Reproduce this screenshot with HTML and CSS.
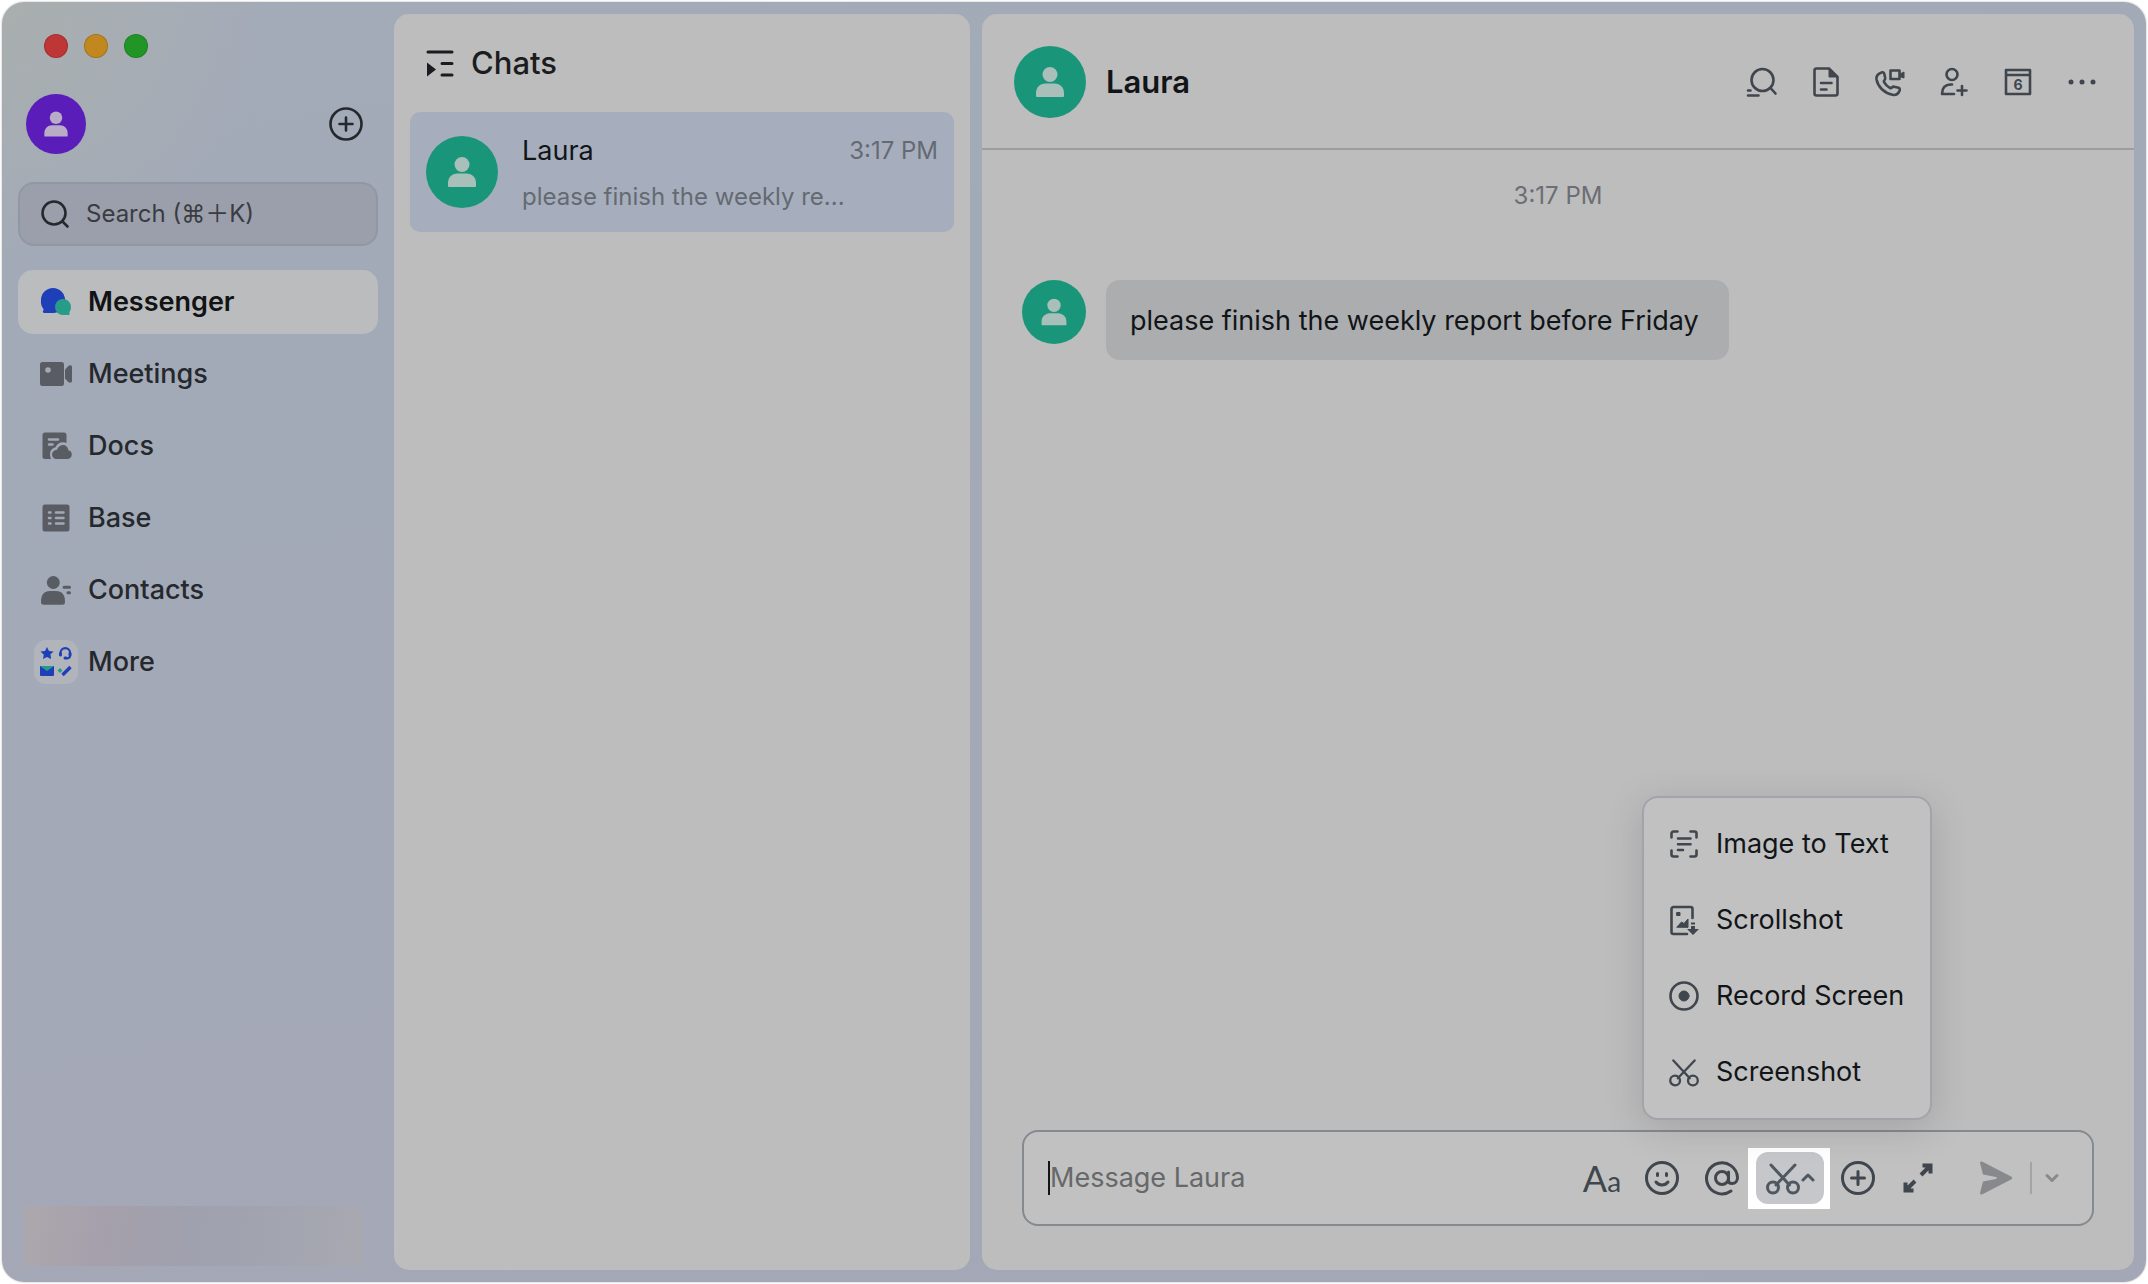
FILE: index.html
```html
<!DOCTYPE html>
<html lang="en">
<head>
  <meta charset="UTF-8">
  <meta name="viewport" content="width=device-width, initial-scale=1.0">
  <title>Messenger</title>
  <link rel="stylesheet" href="styles.css">
</head>
<body>
  <!-- shared shapes -->
  <svg class="defs" aria-hidden="true">
    <symbol id="person" viewBox="0 0 72 72">
      <circle cx="36" cy="28.5" r="7.5"/>
      <path d="M22 50v-3c0-5.500 4-9.500 9.500-9.500h9c5.500 0 9.500 4 9.500 9.500v3a1 1 0 0 1-1 1H23a1 1 0 0 1-1-1z"/>
    </symbol>
    <symbol id="scissors" viewBox="0 0 36 36">
      <path d="M6 5l18.500 20M30 5L11 25"/>
      <circle cx="8" cy="27.500" r="5.500"/>
      <circle cx="28" cy="27.500" r="5.500"/>
    </symbol>
    <symbol id="plus-circle" viewBox="0 0 36 36">
      <circle cx="18" cy="18" r="15.500"/>
      <path d="M18 11.500v13M11.500 18h13"/>
    </symbol>
  </svg>

  <div class="window">
    <aside class="sidebar">
      <div class="lights">
        <span class="light red"></span>
        <span class="light yellow"></span>
        <span class="light green"></span>
      </div>

      <div class="profile">
        <button class="avatar me" aria-label="My profile"><svg><use href="#person"/></svg></button>
        <button class="create" aria-label="Create"><svg class="line"><use href="#plus-circle"/></svg></button>
      </div>

      <label class="search">
        <svg class="line" width="30" height="30" viewBox="0 0 30 30"><circle cx="14" cy="14" r="11.500"/><path d="M22.500 22.500l5 5"/></svg>
        <input type="text" placeholder="Search (⌘＋K)" aria-label="Search">
      </label>

      <nav class="nav">
        <a class="nav-item active" href="#">
          <svg width="32" height="32" viewBox="0 0 32 32">
            <path fill="#1f3fb9" d="M13 2a12 12 0 0 1 12 12c0 7-5 13-12 13H4.500c-2 0-2-2-.8-3.500A13 13 0 0 1 1 14 12 12 0 0 1 13 2z"/>
            <path fill="#279d89" d="M23 13a8 8 0 0 1 8 8c0 2-.6 3.800-1.500 5v2c0 .8-.4 1-1 1H23a8 8 0 0 1 0-16z"/>
          </svg>
          Messenger
        </a>
        <a class="nav-item" href="#">
          <svg width="32" height="32" viewBox="0 0 32 32">
            <path fill-rule="evenodd" d="M2.500 4h19A2.500 2.500 0 0 1 24 6.500v19a2.500 2.500 0 0 1-2.500 2.500h-19A2.500 2.500 0 0 1 0 25.500v-19A2.500 2.500 0 0 1 2.500 4zM8 9.200a2.800 2.800 0 1 0 0 5.600 2.800 2.800 0 0 0 0-5.600z"/>
            <path d="M25 11.500l3-3.200c1.200-1.200 4-1.500 4 .7v14c0 2.200-2.800 1.900-4 .7l-3-3.200z"/>
          </svg>
          Meetings
        </a>
        <a class="nav-item" href="#">
          <svg width="32" height="32" viewBox="0 0 32 32">
            <path d="M5 2.500h19A2.500 2.500 0 0 1 26.500 5v8c-1-.5-2.200-.8-3.500-.8-3.700 0-6.300 2-7.500 5-3.500.8-5.500 3.300-5.500 6.800 0 2 .4 3.800 1.200 5H5A2.500 2.500 0 0 1 2.500 26.500V5A2.500 2.500 0 0 1 5 2.500z"/>
            <path class="cut" d="M9 9.500h9M9 14.500h3.500"/>
            <path d="M17 29c-6.500 0-6.700-8.800 0-9.300C19.500 12.800 28 14 28.300 20.300c5 .8 4.500 8.700-.8 8.700z"/>
          </svg>
          Docs
        </a>
        <a class="nav-item" href="#">
          <svg width="32" height="32" viewBox="0 0 32 32">
            <rect x="2.500" y="2.500" width="27" height="27" rx="2.500"/>
            <path class="cut" d="M9 10.500h1.500M16 10.500h7.500M9 16h1.500M16 16h7.500M9 21.500h1.500M16 21.500h7.500"/>
          </svg>
          Base
        </a>
        <a class="nav-item" href="#">
          <svg width="32" height="32" viewBox="0 0 32 32">
            <circle cx="13.300" cy="8.500" r="6.500"/>
            <path d="M1 28c0-7.500 3-11 9-11h6c6 0 9 3.500 9 11 0 1.800-.8 2.800-2.500 2.800h-19C1.800 30.800 1 29.800 1 28z"/>
            <path class="dash" d="M24 13.300h5.500M28 18.700h1.500"/>
          </svg>
          Contacts
        </a>
        <a class="nav-item" href="#">
          <svg class="tile" width="44" height="44" viewBox="0 0 44 44">
            <path fill="#279d89" d="M13 15h4v4z"/>
            <path fill="#1f3fb9" d="M13 7l2 4 4.500.6-3.300 3.100.8 4.300-4-2-4 2 .8-4.300-3.300-3.100L11 11z"/>
            <path fill="none" stroke="#1f3fb9" stroke-width="2.200" d="M26.500 15.500V13a4.800 4.800 0 0 1 9.600 0v2.500c0 1.500-1.500 3-4 3"/>
            <path stroke="#1f3fb9" stroke-width="3" stroke-linecap="round" d="M26.500 13.500v1.500M36 13.500v1.500M31 18h1"/>
            <path fill="#1f3fb9" d="M6 26h14v9a1 1 0 0 1-1 1H7a1 1 0 0 1-1-1z"/>
            <path fill="#279d89" d="M6 26h14l-7 5z"/>
            <path stroke="#1f3fb9" stroke-width="3.400" d="M28.500 35l8-8"/>
            <path fill="#279d89" d="M26 28l2.500 2.500L26 33l-2.500-2.500z"/>
          </svg>
          More
        </a>
      </nav>

      <div class="footer-blur"></div>
    </aside>

    <section class="panel chats">
      <h2 class="chats-title">
        <svg width="30" height="28" viewBox="0 0 30 28">
          <path fill="none" stroke="currentColor" stroke-width="3" stroke-linecap="round" d="M3 3h24M17 14.500h10M17 26h10"/>
          <path fill="currentColor" d="M2 13.500l9 7-9 7z"/>
        </svg>
        Chats
      </h2>
      <a class="chat-item" href="#">
        <span class="avatar large"><svg><use href="#person"/></svg></span>
        <span class="chat-body">
          <span class="chat-top"><span class="chat-name">Laura</span><time>3:17 PM</time></span>
          <span class="chat-preview">please finish the weekly re...</span>
        </span>
      </a>
    </section>

    <main class="panel conversation">
      <header class="header">
        <span class="avatar large"><svg><use href="#person"/></svg></span>
        <h1>Laura</h1>
        <div class="actions">
          <button aria-label="Search in chat"><svg class="line" width="32" height="32" viewBox="0 0 32 32"><circle cx="16.500" cy="14" r="11"/><path d="M24.500 22l5 5.500M2 24.500h2.500M2 29.500h10.500"/></svg></button>
          <button aria-label="Docs"><svg class="line" width="32" height="32" viewBox="0 0 32 32"><path d="M6.500 2.500H19l8.500 8.500v16.500a2 2 0 0 1-2 2h-19a2 2 0 0 1-2-2v-23a2 2 0 0 1 2-2zM11 17h10.500M11 23.500h5.500"/><path class="solid" d="M19 2.500V11h8.500z"/></svg></button>
          <button aria-label="Call"><svg class="line" width="32" height="32" viewBox="0 0 32 32"><path d="M7.500 6.500c1.300-.7 2.500 0 2.800 1.300l.9 4.200c.2 1-.2 1.700-.9 2.400-.5.500-.6 1.100-.2 1.800 1.400 2.600 3.400 4.500 6 5.800.7.300 1.200.2 1.700-.3.700-.8 1.300-1.200 2.300-1l4.500 1.100c1.300.4 1.500 1.800.8 3.300-1.500 3.300-3.600 4.300-6.800 3.700C10 27 4 21 2.500 13.500 2 10.200 4 7.800 7.500 6.500z"/><path d="M16.500 4.500h9v8.500h-9z"/><path class="solid" d="M27 7.500l3-1.500v6l-3-1z"/></svg></button>
          <button aria-label="Add members"><svg class="line" width="32" height="32" viewBox="0 0 32 32"><circle cx="14" cy="8.500" r="5.500"/><path d="M14 18.500h-1c-6 0-9 3.500-9 9.500h12M24 20v9M19.500 24.500h9"/></svg></button>
          <button aria-label="Calendar"><svg class="line" width="32" height="32" viewBox="0 0 32 32"><path d="M4 4h24v24H4zM4 9h24"/><text x="16" y="23.500">6</text></svg></button>
          <button aria-label="More actions"><svg width="32" height="32" viewBox="0 0 32 32"><circle cx="5" cy="16" r="2.500"/><circle cx="16" cy="16" r="2.500"/><circle cx="27" cy="16" r="2.500"/></svg></button>
        </div>
      </header>

      <div class="messages">
        <time>3:17 PM</time>
        <div class="message">
          <span class="avatar"><svg><use href="#person"/></svg></span>
          <p class="bubble">please finish the weekly report before Friday</p>
        </div>
      </div>

      <div class="composer">
        <span class="caret"></span>
        <input type="text" placeholder="Message Laura" aria-label="Message Laura">
        <div class="tools">
          <button class="format" aria-label="Formatting">A<small>a</small></button>
          <button aria-label="Emoji"><svg class="line" width="36" height="36" viewBox="0 0 36 36"><circle cx="18" cy="18" r="15.500"/><path d="M12 22c1.700 2.200 3.700 3 6 3s4.300-.8 6-3M13.500 13.500v2M22.500 13.500v2"/></svg></button>
          <button aria-label="Mention"><svg class="line" width="36" height="36" viewBox="0 0 36 36"><circle cx="18" cy="18" r="6.500"/><path d="M24.500 12v8.500c0 2 1.500 3 3.500 3 3.500 0 5.500-2.500 5.500-6A15.500 15.500 0 1 0 27 31"/></svg></button>
          <div class="highlight">
            <button class="snip" aria-label="Screenshot options" aria-expanded="true">
              <svg class="line" width="36" height="36"><use href="#scissors"/></svg>
              <svg class="line" width="14" height="36" viewBox="0 0 14 36"><path d="M2 20l5-5 5 5"/></svg>
            </button>
            <div class="menu">
              <button><svg class="line" width="32" height="32" viewBox="0 0 32 32"><path d="M3.500 9.500v-4a2 2 0 0 1 2-2h4M22.500 3.500h4a2 2 0 0 1 2 2v4M28.500 22.500v4a2 2 0 0 1-2 2h-4M9.500 28.500h-4a2 2 0 0 1-2-2v-4M10 10.500h12.500M10 16.200h12.500M10 22h5"/></svg>Image to Text</button>
              <button><svg class="line" width="32" height="32" viewBox="0 0 32 32"><path d="M24.500 14V5a2 2 0 0 0-2-2h-17a2 2 0 0 0-2 2v23a2 2 0 0 0 2 2H19"/><path class="solid" d="M9 8.500h3v3H9zM9 23l4.500-5 2.500 1.500 4-4.500v8z"/><path class="arrow" d="M23 18.500h4v2h-4zM23 22h4v3h4l-6 6-6-6h4z"/></svg>Scrollshot</button>
              <button><svg class="line" width="32" height="32" viewBox="0 0 32 32"><circle cx="16" cy="16" r="13.500"/><circle class="solid" cx="16" cy="16" r="5"/></svg>Record Screen</button>
              <button><svg class="line" width="32" height="32"><use href="#scissors"/></svg>Screenshot</button>
            </div>
          </div>
          <button aria-label="Attach"><svg class="line" width="36" height="36"><use href="#plus-circle"/></svg></button>
          <button aria-label="Expand"><svg class="line expand" width="36" height="36" viewBox="0 0 36 36"><path d="M21 15l9-9M22.500 5.500h8v8M15 21l-9 9M5.500 22.500v8h8"/></svg></button>
          <button class="send" aria-label="Send"><svg width="36" height="36" viewBox="0 0 36 36"><path d="M2 3c0-1.500 1.300-2 2.500-1.300l29 15c1 .7 1 2 0 2.600l-29 15C3.300 34.900 2 34.300 2 33l3-11.500 13-2.500c1-.3 1-1.700 0-2L5 14.500z"/></svg></button>
          <span class="divider"></span>
          <button class="send-options" aria-label="Send options"><svg class="line" width="16" height="36" viewBox="0 0 16 36"><path d="M3 15.500l5 5 5-5"/></svg></button>
        </div>
      </div>
    </main>
  </div>
</body>
</html>
```
FILE: styles.css
```css
* {
  box-sizing: border-box;
}

body {
  margin: 0;
  padding: 2px;
  height: 100vh;
  background: #fff;
  color: #111518;
  font-family: Inter, "Noto Sans CJK SC", sans-serif;
  font-size: 27px;
  line-height: 36px;
}

button,
input {
  font: inherit;
  color: inherit;
  background: none;
  border: none;
  padding: 0;
  outline: none;
}

button {
  display: flex;
  align-items: center;
  justify-content: center;
  cursor: pointer;
}

a {
  color: inherit;
  text-decoration: none;
}

h1,
h2,
p {
  margin: 0;
}

svg {
  flex: none;
  fill: currentColor;
}

.defs {
  position: absolute;
  width: 0;
  height: 0;
}

.line {
  fill: none;
  stroke: currentColor;
  stroke-width: 2.6;
  stroke-linecap: round;
  stroke-linejoin: round;
}

.line .solid {
  fill: currentColor;
  stroke-width: 1;
}

.line .arrow {
  fill: currentColor;
  stroke: none;
}

.window {
  display: grid;
  grid-template-columns: 392px 576px 1fr;
  height: 100%;
  padding: 12px 12px 12px 0;
  border-radius: 22px;
  background:
    radial-gradient(circle at 0 0, #a9afae, rgba(169, 175, 174, 0) 260px),
    linear-gradient(170deg, #a4abb8 0%, #a2aab7 25%, #a4a9b7 50%, #a4a7b6 100%);
  box-shadow: 0 0 2px rgba(0, 0, 0, 0.35);
}

.panel {
  display: flex;
  flex-direction: column;
  min-width: 0;
  border-radius: 15px;
  background: #bdbdbd;
}

.avatar {
  display: flex;
  flex: none;
  width: 64px;
  height: 64px;
  border-radius: 50%;
  background: #199679;
  color: #a9bfba;
}

.avatar svg {
  width: 100%;
  height: 100%;
}

.avatar.large {
  width: 72px;
  height: 72px;
}

.avatar.me {
  width: 60px;
  height: 60px;
  background: #5a1dba;
  color: #b9acc6;
}

/* sidebar */
.sidebar {
  display: flex;
  flex-direction: column;
  padding: 20px 16px 4px;
  color: #25282c;
}

.lights {
  display: flex;
  gap: 16px;
  padding-left: 26px;
}

.light {
  width: 24px;
  height: 24px;
  border-radius: 50%;
  border: 1px solid rgba(0, 0, 0, 0.15);
}

.red {
  background: #bf3636;
}

.yellow {
  background: #c0881f;
}

.green {
  background: #219627;
}

.profile {
  display: flex;
  align-items: center;
  justify-content: space-between;
  margin-top: 36px;
  padding: 0 14px 0 8px;
}

.create svg {
  width: 36px;
  height: 36px;
}

.search {
  display: flex;
  align-items: center;
  gap: 16px;
  height: 64px;
  margin-top: 28px;
  padding: 0 20px;
  border: 2px solid #9298a3;
  border-radius: 16px;
  background: #9b9fab;
}

.search input {
  flex: 1;
  min-width: 0;
  font-size: 24px;
}

.search input::placeholder {
  color: #393c41;
  opacity: 1;
}

.nav {
  display: flex;
  flex-direction: column;
  gap: 8px;
  margin-top: 24px;
  font-weight: 500;
}

.nav-item {
  display: flex;
  align-items: center;
  gap: 16px;
  height: 64px;
  padding: 0 22px;
  border-radius: 15px;
}

.nav-item svg {
  fill: #595d63;
}

.nav-item.active {
  background: #babcbe;
  color: #111315;
  font-weight: 600;
}

.nav-item .cut {
  stroke: #a2a9b5;
  stroke-width: 2.5;
  stroke-linecap: round;
}

.nav-item .dash {
  stroke: #595d63;
  stroke-width: 3;
  stroke-linecap: round;
}

.nav-item .tile {
  margin: 0 -6px;
  border-radius: 12px;
  background: #b1b4ba;
}

.footer-blur {
  height: 60px;
  margin: auto 16px 0 6px;
  background: linear-gradient(100deg, #ada8ad, #a49fab 25%, #9fa1ae 52%, #a2a5b0 75%, #a8a8b0);
}

/* chat list */
.chats-title {
  display: flex;
  align-items: center;
  gap: 16px;
  height: 98px;
  padding-left: 31px;
  font-size: 31px;
  font-weight: 500;
  color: #1b1c20;
}

.chat-item {
  display: flex;
  align-items: center;
  gap: 24px;
  height: 120px;
  margin: 0 16px;
  padding: 0 16px;
  border-radius: 10px;
  background: #a6aebd;
}

.chat-body {
  flex: 1;
  min-width: 0;
  padding-top: 4px;
}

.chat-top {
  display: flex;
  justify-content: space-between;
  margin-bottom: 10px;
}

time,
.chat-preview {
  color: #646a72;
  font-size: 24px;
}

.chat-preview {
  display: block;
}

/* conversation */
.conversation {
  margin-left: 12px;
}

.header {
  display: flex;
  align-items: center;
  height: 136px;
  padding: 2px 28px 0 32px;
  border-bottom: 2px solid #9c9d9f;
}

.header h1 {
  margin-left: 20px;
  font-size: 31px;
  font-weight: 600;
}

.actions {
  display: flex;
  gap: 16px;
  margin-left: auto;
  color: #40464d;
}

.actions button {
  width: 48px;
  height: 48px;
}

.actions text {
  fill: currentColor;
  stroke: none;
  font-size: 14px;
  font-weight: 700;
  text-anchor: middle;
}

.messages {
  flex: 1;
  display: flex;
  flex-direction: column;
  padding: 28px 40px;
}

.messages time {
  align-self: center;
  color: #6b6e73;
}

.message {
  display: flex;
  align-items: flex-start;
  gap: 20px;
  margin-top: 66px;
}

.bubble {
  padding: 23px 30px 21px 24px;
  border-radius: 14px;
  background: #acadaf;
}

/* message box */
.composer {
  display: flex;
  align-items: center;
  height: 96px;
  margin: 0 40px 44px;
  padding: 0 28px 0 24px;
  border: 2px solid #858a8f;
  border-radius: 16px;
  background: #c1c1c1;
}

.caret {
  width: 2px;
  height: 34px;
  background: #111518;
}

.composer input {
  flex: 1;
  min-width: 0;
}

.composer input::placeholder {
  color: #66686a;
  opacity: 1;
}

.tools {
  display: flex;
  align-items: center;
  gap: 8px;
  color: #40464d;
}

.tools > button {
  width: 52px;
  height: 52px;
}

.tools .line {
  stroke-width: 3;
}

.tools .expand {
  stroke-width: 4;
  stroke-linecap: butt;
  stroke-linejoin: miter;
}

.tools .format {
  align-items: baseline;
  font-family: Lato, sans-serif;
  font-size: 36px;
  line-height: 52px;
}

.format small {
  font-size: 28px;
}

/* white frame round the screenshot button */
.highlight {
  position: relative;
  margin: 0 -6px 0 -8px;
  padding: 4px 6px 5px 8px;
  background: #fff;
}

.snip {
  width: 68px;
  height: 52px;
  border-radius: 12px;
  background: #c5c7ca;
  color: #4f5760;
}

.menu {
  position: absolute;
  bottom: calc(100% + 28px);
  left: -106px;
  width: 290px;
  padding: 8px 0;
  border: 2px solid #a3a4aa;
  border-radius: 16px;
  background: #c1c1c1;
  box-shadow: 0 8px 40px rgba(0, 0, 0, 0.14);
}

.menu button {
  justify-content: flex-start;
  gap: 16px;
  width: 100%;
  height: 76px;
  padding-left: 24px;
  color: #111518;
  white-space: nowrap;
}

.tools .menu .line {
  color: #40464d;
  stroke-width: 2.6;
}

.tools .menu .solid {
  stroke-width: 1;
}

.tools .send {
  margin-left: 18px;
  color: #88898d;
}

.divider {
  width: 2px;
  height: 32px;
  background: #a3a4a8;
}

.tools .send-options {
  width: 24px;
  color: #88898d;
}
```
